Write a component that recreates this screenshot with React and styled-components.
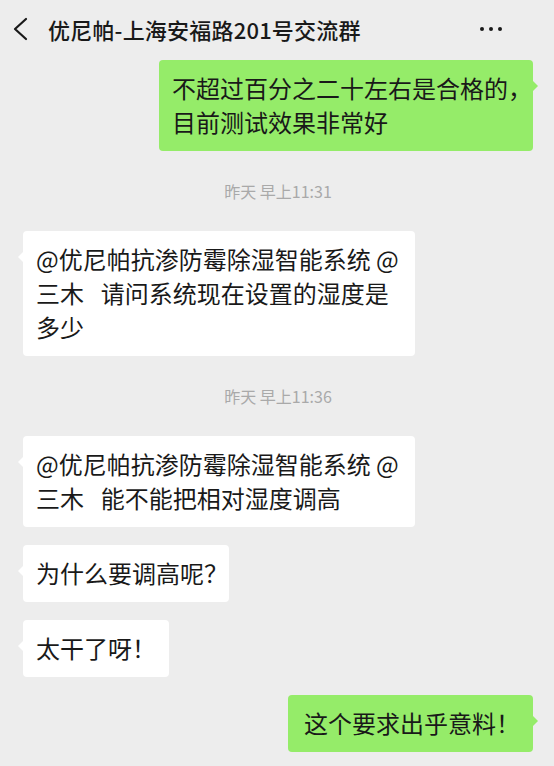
import React from "react";
import styled, { createGlobalStyle } from "styled-components";

const Global = createGlobalStyle`
  html, body { margin: 0; padding: 0; background: #ededed; }
  body { font-family: "Noto Sans CJK SC", "Noto Sans", sans-serif; color: #191919; }
  * { box-sizing: border-box; }
`;

const Page = styled.div`
  width: 554px;
  min-height: 766px;
  background: #ededed;
  display: flex;
  flex-direction: column;
  overflow: hidden;
`;

const Header = styled.header`
  height: 58px;
  display: flex;
  align-items: center;
  padding: 0 20px 0 10px;
  gap: 16px;
`;

const BackBtn = styled.div`
  width: 22px;
  height: 24px;
  display: flex;
  align-items: center;
  justify-content: center;
`;

const Title = styled.h1`
  flex: 1;
  margin: 0;
  font-size: 22px;
  font-weight: 500;
  line-height: 30px;
  color: #191919;
  letter-spacing: 0.2px;
`;

const More = styled.div`
  display: flex;
  gap: 5px;
  align-items: center;
  padding-right: 32px;
`;

const Dot = styled.span`
  width: 4px;
  height: 4px;
  border-radius: 50%;
  background: #191919;
`;

const List = styled.main`
  display: flex;
  flex-direction: column;
  gap: 18px;
  padding: 2px 21px 0 23px;
`;

const Row = styled.div`
  display: flex;
  justify-content: ${(p) => (p.$self ? "flex-end" : "flex-start")};
`;

const Bubble = styled.div`
  position: relative;
  max-width: 392px;
  padding: 11px 13px 12px ${(p) => (p.$indent ? "16px" : "13px")};
  border-radius: 4px;
  background: ${(p) => (p.$self ? "#95ec69" : "#ffffff")};
  font-size: 24px;
  line-height: 34px;
  color: #191919;
  word-break: break-all;
  white-space: pre-wrap;
  &::after {
    content: "";
    position: absolute;
    top: 20px;
    ${(p) => (p.$self ? "right: -5px;" : "left: -5px;")}
    width: 0;
    height: 0;
    border-top: 6px solid transparent;
    border-bottom: 6px solid transparent;
    ${(p) =>
      p.$self
        ? "border-left: 6px solid #95ec69;"
        : "border-right: 6px solid #ffffff;"}
  }
`;

const Half = styled.span`
  font-feature-settings: "halt";
`;

const Time = styled.div`
  text-align: center;
  font-size: 16px;
  line-height: 20px;
  color: #a9a9a9;
  padding: 12px 0;
`;

export default function App() {
  return (
    <>
      <Global />
      <Page>
        <Header>
          <BackBtn>
            <svg width="16" height="24" viewBox="0 0 16 24">
              <polyline
                points="13,2 2,12 13,22"
                fill="none"
                stroke="#191919"
                strokeWidth="2.2"
                strokeLinecap="round"
                strokeLinejoin="round"
              />
            </svg>
          </BackBtn>
          <Title>优尼帕-上海安福路201号交流群</Title>
          <More>
            <Dot />
            <Dot />
            <Dot />
          </More>
        </Header>
        <List>
          <Row $self>
            <Bubble $self>
              不超过百分之二十左右是合格的<Half>，</Half>
              {"\n"}目前测试效果非常好
            </Bubble>
          </Row>
          <Time>昨天 早上11:31</Time>
          <Row>
            <Bubble>
              {"@优尼帕抗渗防霉除湿智能系统 @三木\u2002\u2009请问系统现在设置的湿度是多少"}
            </Bubble>
          </Row>
          <Time>昨天 早上11:36</Time>
          <Row>
            <Bubble>
              {"@优尼帕抗渗防霉除湿智能系统 @三木\u2002\u2009能不能把相对湿度调高"}
            </Bubble>
          </Row>
          <Row>
            <Bubble>
              为什么要调高呢<Half>？</Half>
            </Bubble>
          </Row>
          <Row>
            <Bubble>太干了呀！</Bubble>
          </Row>
          <Row $self>
            <Bubble $self $indent>
              这个要求出乎意料！
            </Bubble>
          </Row>
        </List>
      </Page>
    </>
  );
}
